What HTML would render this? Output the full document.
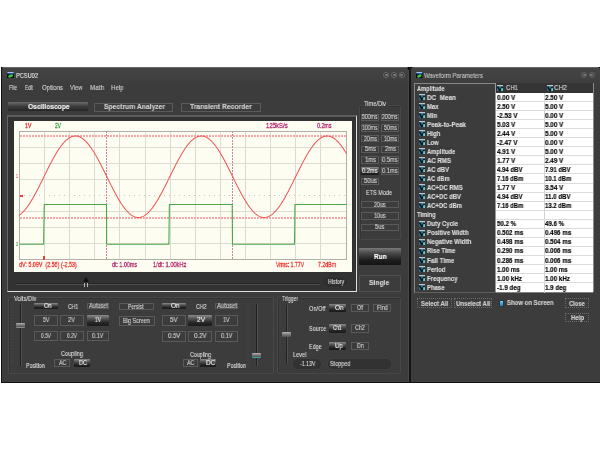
<!DOCTYPE html><html><head><meta charset="utf-8"><style>
*{margin:0;padding:0;box-sizing:border-box}
html,body{width:600px;height:450px;overflow:hidden;background:#fff}
body{position:relative;font-family:"Liberation Sans",sans-serif}
.abs{position:absolute}
.t{position:absolute;white-space:nowrap;line-height:1;transform-origin:0 0;-webkit-text-stroke:0.12px currentColor;will-change:transform}
.win{position:absolute;background:#3c3c3c}
.btn{position:absolute;border:1px solid #5a5a5a}
.sel{position:absolute;background:linear-gradient(#8c8c8c,#505050 35%,#262626 70%,#1a1a1a);border-radius:1px}
.grp{position:absolute;border:1px solid #484848;border-radius:2px;box-shadow:inset 1px 1px 0 #333}
</style></head><body>

<div class="abs" style="left:596px;top:67px;width:4px;height:4px;background:#000"></div><div class="abs" style="left:1px;top:67px;width:4px;height:4px;background:#000"></div><div class="abs" style="left:405px;top:67px;width:10px;height:4px;background:#000"></div>
<div class="win" style="left:1px;top:67px;width:408px;height:316px;border-radius:3px 3px 0 0;border:1px solid #111;border-top:1px solid #666;background:linear-gradient(#444 0px,#3e3e3e 14px,#3c3c3c 20px)"></div>
<div class="win" style="left:411px;top:67px;width:189px;height:316px;border-radius:3px 3px 0 0;border-bottom:1px solid #111;border-top:1px solid #666;background:linear-gradient(#444 0px,#3e3e3e 14px,#3c3c3c 20px)"></div>
<div class="abs" style="left:409px;top:67px;width:2px;height:316px;background:#151515"></div><div class="abs" style="left:408px;top:70px;width:1px;height:312px;background:#484848"></div>
<svg class="abs" style="left:7px;top:71.75px" width="7" height="6.5" viewBox="0 0 7 7" preserveAspectRatio="none"><rect width="7" height="7" fill="#050805"/><rect x="0.3" y="0" width="6.4" height="1.4" fill="#9cc4f4"/><rect x="0.3" y="1.4" width="6.4" height="1" fill="#2a58c8"/><ellipse cx="3.6" cy="4.3" rx="2.6" ry="1.4" transform="rotate(-25 3.6 4.3)" fill="#3ac83a"/></svg>
<div class="t" style="left:15.50px;top:71.89px;font-size:7.5px;font-weight:normal;color:#e6e6e6;transform:scaleX(0.7537);">PCSU02</div>
<div class="abs" style="left:383px;top:72px;width:6px;height:6px;border-radius:50%;border:1px solid #6a6a6a;background:#383838"></div><div class="abs" style="left:384.5px;top:74px;width:3px;height:2px;background:#7a7a7a;border-radius:1px"></div>
<div class="abs" style="left:391px;top:72px;width:6px;height:6px;border-radius:50%;border:1px solid #6a6a6a;background:#383838"></div><div class="abs" style="left:392.5px;top:74px;width:3px;height:2px;background:#7a7a7a;border-radius:1px"></div>
<div class="abs" style="left:398.5px;top:72px;width:6px;height:6px;border-radius:50%;border:1px solid #6a6a6a;background:#383838"></div><div class="abs" style="left:400.0px;top:74px;width:3px;height:2px;background:#7a7a7a;border-radius:1px"></div>
<div class="t" style="left:9.10px;top:84.19px;font-size:7.5px;font-weight:normal;color:#d4d4d4;transform:scaleX(0.6780);">File</div>
<div class="t" style="left:24.90px;top:84.19px;font-size:7.5px;font-weight:normal;color:#d4d4d4;transform:scaleX(0.6184);">Edit</div>
<div class="t" style="left:42.30px;top:84.19px;font-size:7.5px;font-weight:normal;color:#d4d4d4;transform:scaleX(0.8121);">Options</div>
<div class="t" style="left:70.40px;top:84.19px;font-size:7.5px;font-weight:normal;color:#d4d4d4;transform:scaleX(0.7690);">View</div>
<div class="t" style="left:89.90px;top:84.19px;font-size:7.5px;font-weight:normal;color:#d4d4d4;transform:scaleX(0.8449);">Math</div>
<div class="t" style="left:110.90px;top:84.19px;font-size:7.5px;font-weight:normal;color:#d4d4d4;transform:scaleX(0.8162);">Help</div>
<div class="abs" style="left:8px;top:101.5px;width:80px;height:9.5px;background:linear-gradient(#6a6a6a,#3a3a3a 50%,#262626);border-radius:1px"></div>
<div class="t" style="left:27.50px;top:102.89px;font-size:7.5px;font-weight:bold;color:#f4f4f4;transform:scaleX(0.8889);-webkit-text-stroke:0.15px currentColor;">Oscilloscope</div>
<div class="btn" style="left:94px;top:102.5px;width:79px;height:9.5px"></div>
<div class="t" style="left:104.00px;top:103.39px;font-size:7.5px;font-weight:bold;color:#d0d0d0;transform:scaleX(0.9014);-webkit-text-stroke:0.15px currentColor;">Spectrum Analyzer</div>
<div class="btn" style="left:181px;top:102.5px;width:80px;height:9.5px"></div>
<div class="t" style="left:190.00px;top:103.39px;font-size:7.5px;font-weight:bold;color:#d0d0d0;transform:scaleX(0.9026);-webkit-text-stroke:0.15px currentColor;">Transient Recorder</div>
<div class="abs" style="left:7px;top:114.5px;width:350px;height:177.5px;border-top:2px solid #5c5c5c;border-left:1px solid #666;border-right:1px solid #e0e0e0;border-bottom:1px solid #e0e0e0"></div>
<div class="abs" style="left:8px;top:116.5px;width:348px;height:174.5px;background:#323232"></div>
<div class="abs" style="left:14px;top:121px;width:337.5px;height:150.5px;background:#fdfdf2"></div>
<svg class="abs" style="left:0;top:0" width="600" height="450" viewBox="0 0 600 450" shape-rendering="crispEdges"><line x1="44.5" y1="131" x2="44.5" y2="260" stroke="#dddcd2"/><line x1="69.5" y1="131" x2="69.5" y2="260" stroke="#dddcd2"/><line x1="94.5" y1="131" x2="94.5" y2="260" stroke="#dddcd2"/><line x1="119.5" y1="131" x2="119.5" y2="260" stroke="#dddcd2"/><line x1="145.5" y1="131" x2="145.5" y2="260" stroke="#dddcd2"/><line x1="170.5" y1="131" x2="170.5" y2="260" stroke="#dddcd2"/><line x1="195.5" y1="131" x2="195.5" y2="260" stroke="#dddcd2"/><line x1="220.5" y1="131" x2="220.5" y2="260" stroke="#dddcd2"/><line x1="245.5" y1="131" x2="245.5" y2="260" stroke="#dddcd2"/><line x1="270.5" y1="131" x2="270.5" y2="260" stroke="#dddcd2"/><line x1="295.5" y1="131" x2="295.5" y2="260" stroke="#dddcd2"/><line x1="320.5" y1="131" x2="320.5" y2="260" stroke="#dddcd2"/><line x1="19" y1="147.5" x2="346.5" y2="147.5" stroke="#dddcd2"/><line x1="19" y1="163.5" x2="346.5" y2="163.5" stroke="#dddcd2"/><line x1="19" y1="179.5" x2="346.5" y2="179.5" stroke="#dddcd2"/><line x1="19" y1="195.5" x2="346.5" y2="195.5" stroke="#c8c8c0" stroke-dasharray="1 4"/><line x1="19" y1="211.5" x2="346.5" y2="211.5" stroke="#dddcd2"/><line x1="19" y1="227.5" x2="346.5" y2="227.5" stroke="#dddcd2"/><line x1="19" y1="243.5" x2="346.5" y2="243.5" stroke="#dddcd2"/><rect x="19.5" y="131.5" width="327" height="128" fill="none" stroke="#b0b0a8"/><line x1="20" y1="136" x2="346.5" y2="136" stroke="#f6a8a8" stroke-width="2" stroke-dasharray="2 1"/><line x1="20" y1="217.5" x2="346.5" y2="217.5" stroke="#f6a8a8" stroke-width="2" stroke-dasharray="2 1"/><line x1="106.5" y1="131" x2="106.5" y2="260" stroke="#d080a8" stroke-dasharray="2 1"/><line x1="232.5" y1="131" x2="232.5" y2="260" stroke="#d080a8" stroke-dasharray="2 1"/></svg>
<svg class="abs" style="left:0;top:0" width="600" height="450" viewBox="0 0 600 450"><polyline points="19.00,215.36 19.50,215.02 20.00,214.66 20.50,214.27 21.00,213.86 21.50,213.43 22.00,212.98 22.50,212.50 23.00,212.00 23.50,211.48 24.00,210.94 24.50,210.37 25.00,209.79 25.50,209.18 26.00,208.56 26.50,207.91 27.00,207.25 27.50,206.56 28.00,205.86 28.50,205.14 29.00,204.40 29.50,203.64 30.00,202.87 30.50,202.08 31.00,201.28 31.50,200.46 32.00,199.62 32.50,198.78 33.00,197.91 33.50,197.04 34.00,196.15 34.50,195.25 35.00,194.34 35.50,193.41 36.00,192.48 36.50,191.54 37.00,190.58 37.50,189.62 38.00,188.65 38.50,187.68 39.00,186.69 39.50,185.70 40.00,184.71 40.50,183.71 41.00,182.70 41.50,181.70 42.00,180.69 42.50,179.67 43.00,178.66 43.50,177.64 44.00,176.62 44.50,175.61 45.00,174.59 45.50,173.57 46.00,172.56 46.50,171.55 47.00,170.54 47.50,169.54 48.00,168.54 48.50,167.55 49.00,166.56 49.50,165.58 50.00,164.60 50.50,163.64 51.00,162.68 51.50,161.73 52.00,160.79 52.50,159.86 53.00,158.94 53.50,158.03 54.00,157.13 54.50,156.24 55.00,155.37 55.50,154.51 56.00,153.67 56.50,152.83 57.00,152.02 57.50,151.22 58.00,150.43 58.50,149.66 59.00,148.91 59.50,148.18 60.00,147.46 60.50,146.76 61.00,146.09 61.50,145.42 62.00,144.78 62.50,144.16 63.00,143.56 63.50,142.98 64.00,142.42 64.50,141.89 65.00,141.37 65.50,140.88 66.00,140.41 66.50,139.96 67.00,139.53 67.50,139.13 68.00,138.75 68.50,138.39 69.00,138.06 69.50,137.76 70.00,137.47 70.50,137.21 71.00,136.98 71.50,136.77 72.00,136.59 72.50,136.43 73.00,136.29 73.50,136.18 74.00,136.10 74.50,136.04 75.00,136.01 75.50,136.00 76.00,136.02 76.50,136.06 77.00,136.13 77.50,136.22 78.00,136.34 78.50,136.49 79.00,136.66 79.50,136.85 80.00,137.07 80.50,137.31 81.00,137.58 81.50,137.88 82.00,138.19 82.50,138.53 83.00,138.90 83.50,139.29 84.00,139.70 84.50,140.13 85.00,140.59 85.50,141.07 86.00,141.57 86.50,142.10 87.00,142.64 87.50,143.21 88.00,143.80 88.50,144.41 89.00,145.04 89.50,145.69 90.00,146.35 90.50,147.04 91.00,147.75 91.50,148.47 92.00,149.21 92.50,149.97 93.00,150.75 93.50,151.54 94.00,152.34 94.50,153.17 95.00,154.00 95.50,154.85 96.00,155.72 96.50,156.60 97.00,157.49 97.50,158.39 98.00,159.30 98.50,160.23 99.00,161.16 99.50,162.11 100.00,163.06 100.50,164.02 101.00,164.99 101.50,165.97 102.00,166.95 102.50,167.94 103.00,168.94 103.50,169.94 104.00,170.95 104.50,171.95 105.00,172.97 105.50,173.98 106.00,175.00 106.50,176.01 107.00,177.03 107.50,178.05 108.00,179.06 108.50,180.08 109.00,181.09 109.50,182.10 110.00,183.11 110.50,184.11 111.00,185.11 111.50,186.10 112.00,187.09 112.50,188.07 113.00,189.04 113.50,190.01 114.00,190.97 114.50,191.91 115.00,192.85 115.50,193.78 116.00,194.70 116.50,195.61 117.00,196.51 117.50,197.39 118.00,198.26 118.50,199.12 119.00,199.96 119.50,200.79 120.00,201.60 120.50,202.40 121.00,203.18 121.50,203.95 122.00,204.70 122.50,205.43 123.00,206.14 123.50,206.84 124.00,207.51 124.50,208.17 125.00,208.81 125.50,209.43 126.00,210.03 126.50,210.60 127.00,211.16 127.50,211.69 128.00,212.20 128.50,212.70 129.00,213.16 129.50,213.61 130.00,214.03 130.50,214.43 131.00,214.81 131.50,215.16 132.00,215.49 132.50,215.79 133.00,216.07 133.50,216.32 134.00,216.55 134.50,216.76 135.00,216.94 135.50,217.10 136.00,217.23 136.50,217.33 137.00,217.41 137.50,217.47 138.00,217.49 138.50,217.50 139.00,217.48 139.50,217.43 140.00,217.36 140.50,217.26 141.00,217.14 141.50,216.99 142.00,216.82 142.50,216.62 143.00,216.40 143.50,216.15 144.00,215.88 144.50,215.58 145.00,215.26 145.50,214.91 146.00,214.54 146.50,214.15 147.00,213.74 147.50,213.30 148.00,212.84 148.50,212.35 149.00,211.85 149.50,211.32 150.00,210.77 150.50,210.20 151.00,209.61 151.50,209.00 152.00,208.37 152.50,207.71 153.00,207.04 153.50,206.35 154.00,205.65 154.50,204.92 155.00,204.18 155.50,203.41 156.00,202.64 156.50,201.84 157.00,201.03 157.50,200.21 158.00,199.37 158.50,198.52 159.00,197.65 159.50,196.77 160.00,195.88 160.50,194.98 161.00,194.06 161.50,193.13 162.00,192.20 162.50,191.25 163.00,190.30 163.50,189.33 164.00,188.36 164.50,187.38 165.00,186.40 165.50,185.41 166.00,184.41 166.50,183.41 167.00,182.40 167.50,181.39 168.00,180.38 168.50,179.37 169.00,178.35 169.50,177.33 170.00,176.32 170.50,175.30 171.00,174.28 171.50,173.27 172.00,172.26 172.50,171.25 173.00,170.24 173.50,169.24 174.00,168.24 174.50,167.25 175.00,166.26 175.50,165.28 176.00,164.31 176.50,163.35 177.00,162.39 177.50,161.44 178.00,160.51 178.50,159.58 179.00,158.66 179.50,157.76 180.00,156.86 180.50,155.98 181.00,155.11 181.50,154.26 182.00,153.41 182.50,152.59 183.00,151.78 183.50,150.98 184.00,150.20 184.50,149.44 185.00,148.69 185.50,147.96 186.00,147.25 186.50,146.56 187.00,145.89 187.50,145.23 188.00,144.60 188.50,143.98 189.00,143.39 189.50,142.81 190.00,142.26 190.50,141.73 191.00,141.22 191.50,140.73 192.00,140.27 192.50,139.83 193.00,139.41 193.50,139.01 194.00,138.64 194.50,138.29 195.00,137.97 195.50,137.67 196.00,137.39 196.50,137.14 197.00,136.91 197.50,136.71 198.00,136.54 198.50,136.38 199.00,136.26 199.50,136.16 200.00,136.08 200.50,136.03 201.00,136.00 201.50,136.00 202.00,136.03 202.50,136.08 203.00,136.16 203.50,136.26 204.00,136.38 204.50,136.54 205.00,136.71 205.50,136.91 206.00,137.14 206.50,137.39 207.00,137.67 207.50,137.97 208.00,138.29 208.50,138.64 209.00,139.01 209.50,139.41 210.00,139.83 210.50,140.27 211.00,140.73 211.50,141.22 212.00,141.73 212.50,142.26 213.00,142.81 213.50,143.39 214.00,143.98 214.50,144.60 215.00,145.23 215.50,145.89 216.00,146.56 216.50,147.25 217.00,147.96 217.50,148.69 218.00,149.44 218.50,150.20 219.00,150.98 219.50,151.78 220.00,152.59 220.50,153.41 221.00,154.26 221.50,155.11 222.00,155.98 222.50,156.86 223.00,157.76 223.50,158.66 224.00,159.58 224.50,160.51 225.00,161.44 225.50,162.39 226.00,163.35 226.50,164.31 227.00,165.28 227.50,166.26 228.00,167.25 228.50,168.24 229.00,169.24 229.50,170.24 230.00,171.25 230.50,172.26 231.00,173.27 231.50,174.28 232.00,175.30 232.50,176.32 233.00,177.33 233.50,178.35 234.00,179.37 234.50,180.38 235.00,181.39 235.50,182.40 236.00,183.41 236.50,184.41 237.00,185.41 237.50,186.40 238.00,187.38 238.50,188.36 239.00,189.33 239.50,190.30 240.00,191.25 240.50,192.20 241.00,193.13 241.50,194.06 242.00,194.98 242.50,195.88 243.00,196.77 243.50,197.65 244.00,198.52 244.50,199.37 245.00,200.21 245.50,201.03 246.00,201.84 246.50,202.64 247.00,203.41 247.50,204.18 248.00,204.92 248.50,205.65 249.00,206.35 249.50,207.04 250.00,207.71 250.50,208.37 251.00,209.00 251.50,209.61 252.00,210.20 252.50,210.77 253.00,211.32 253.50,211.85 254.00,212.35 254.50,212.84 255.00,213.30 255.50,213.74 256.00,214.15 256.50,214.54 257.00,214.91 257.50,215.26 258.00,215.58 258.50,215.88 259.00,216.15 259.50,216.40 260.00,216.62 260.50,216.82 261.00,216.99 261.50,217.14 262.00,217.26 262.50,217.36 263.00,217.43 263.50,217.48 264.00,217.50 264.50,217.49 265.00,217.47 265.50,217.41 266.00,217.33 266.50,217.23 267.00,217.10 267.50,216.94 268.00,216.76 268.50,216.55 269.00,216.32 269.50,216.07 270.00,215.79 270.50,215.49 271.00,215.16 271.50,214.81 272.00,214.43 272.50,214.03 273.00,213.61 273.50,213.16 274.00,212.70 274.50,212.20 275.00,211.69 275.50,211.16 276.00,210.60 276.50,210.03 277.00,209.43 277.50,208.81 278.00,208.17 278.50,207.51 279.00,206.84 279.50,206.14 280.00,205.43 280.50,204.70 281.00,203.95 281.50,203.18 282.00,202.40 282.50,201.60 283.00,200.79 283.50,199.96 284.00,199.12 284.50,198.26 285.00,197.39 285.50,196.51 286.00,195.61 286.50,194.70 287.00,193.78 287.50,192.85 288.00,191.91 288.50,190.97 289.00,190.01 289.50,189.04 290.00,188.07 290.50,187.09 291.00,186.10 291.50,185.11 292.00,184.11 292.50,183.11 293.00,182.10 293.50,181.09 294.00,180.08 294.50,179.06 295.00,178.05 295.50,177.03 296.00,176.01 296.50,175.00 297.00,173.98 297.50,172.97 298.00,171.95 298.50,170.95 299.00,169.94 299.50,168.94 300.00,167.94 300.50,166.95 301.00,165.97 301.50,164.99 302.00,164.02 302.50,163.06 303.00,162.11 303.50,161.16 304.00,160.23 304.50,159.30 305.00,158.39 305.50,157.49 306.00,156.60 306.50,155.72 307.00,154.85 307.50,154.00 308.00,153.17 308.50,152.34 309.00,151.54 309.50,150.75 310.00,149.97 310.50,149.21 311.00,148.47 311.50,147.75 312.00,147.04 312.50,146.35 313.00,145.69 313.50,145.04 314.00,144.41 314.50,143.80 315.00,143.21 315.50,142.64 316.00,142.10 316.50,141.57 317.00,141.07 317.50,140.59 318.00,140.13 318.50,139.70 319.00,139.29 319.50,138.90 320.00,138.53 320.50,138.19 321.00,137.88 321.50,137.58 322.00,137.31 322.50,137.07 323.00,136.85 323.50,136.66 324.00,136.49 324.50,136.34 325.00,136.22 325.50,136.13 326.00,136.06 326.50,136.02 327.00,136.00 327.50,136.01 328.00,136.04 328.50,136.10 329.00,136.18 329.50,136.29 330.00,136.43 330.50,136.59 331.00,136.77 331.50,136.98 332.00,137.21 332.50,137.47 333.00,137.76 333.50,138.06 334.00,138.39 334.50,138.75 335.00,139.13 335.50,139.53 336.00,139.96 336.50,140.41 337.00,140.88 337.50,141.37 338.00,141.89 338.50,142.42 339.00,142.98 339.50,143.56 340.00,144.16 340.50,144.78 341.00,145.42 341.50,146.09 342.00,146.76 342.50,147.46 343.00,148.18 343.50,148.91 344.00,149.66 344.50,150.43 345.00,151.22 345.50,152.02 346.00,152.83 346.50,153.67" fill="none" stroke="#f05858" stroke-width="1.05"/></svg>
<svg class="abs" style="left:0;top:0" width="600" height="450" viewBox="0 0 600 450" shape-rendering="crispEdges"><polyline points="20,244.2 43.6,244.2 44.3,204.5 106.5,204.5 106.7,244.2 168.9,244.2 169.4,204.5 232.2,204.5 232.5,244.2 294.5,244.2 295.0,204.5 346.5,204.5" fill="none" stroke="#48a848" stroke-width="1.1" shape-rendering="auto"/><rect x="43" y="256" width="2" height="4" fill="#e84040"/><rect x="20" y="195" width="3" height="2" fill="#e84040"/></svg>
<div class="t" style="left:25.00px;top:122.14px;font-size:8px;font-weight:normal;color:#ee2e2e;transform:scaleX(0.6431);-webkit-text-stroke:0.3px currentColor;">1V</div>
<div class="t" style="left:55.00px;top:122.14px;font-size:8px;font-weight:normal;color:#20962a;transform:scaleX(0.5920);-webkit-text-stroke:0.3px currentColor;">2V</div>
<div class="t" style="left:266.00px;top:122.14px;font-size:8px;font-weight:normal;color:#b0206a;transform:scaleX(0.7472);-webkit-text-stroke:0.3px currentColor;">125kS/s</div>
<div class="t" style="left:316.50px;top:122.14px;font-size:8px;font-weight:normal;color:#b0206a;transform:scaleX(0.6652);-webkit-text-stroke:0.3px currentColor;">0.2ms</div>
<div class="t" style="left:15.50px;top:173.85px;font-size:5.5px;font-weight:normal;color:#ee2e2e;transform:scaleX(0.6531);">1</div>
<div class="t" style="left:15.50px;top:241.85px;font-size:5.5px;font-weight:normal;color:#20962a;transform:scaleX(0.6531);">2</div>
<div class="t" style="left:19.00px;top:261.14px;font-size:8px;font-weight:normal;color:#ee2e2e;transform:scaleX(0.6712);-webkit-text-stroke:0.3px currentColor;">dV: 5.09V&nbsp; (2.56) (-2.53)</div>
<div class="t" style="left:112.00px;top:261.14px;font-size:8px;font-weight:normal;color:#b0206a;transform:scaleX(0.6692);-webkit-text-stroke:0.3px currentColor;">dt: 1.00ms</div>
<div class="t" style="left:152.50px;top:261.14px;font-size:8px;font-weight:normal;color:#b0206a;transform:scaleX(0.7053);-webkit-text-stroke:0.3px currentColor;">1/dt: 1.00kHz</div>
<div class="t" style="left:275.75px;top:261.14px;font-size:8px;font-weight:normal;color:#ee2e2e;transform:scaleX(0.6405);-webkit-text-stroke:0.3px currentColor;">Vrms: 1.77V</div>
<div class="t" style="left:318.00px;top:261.14px;font-size:8px;font-weight:normal;color:#ee2e2e;transform:scaleX(0.6527);-webkit-text-stroke:0.3px currentColor;">7.2dBm</div>
<div class="abs" style="left:16px;top:283px;width:304px;height:2px;background:#262626;border-bottom:1px solid #4e4e4e"></div>
<div class="abs" style="left:83.5px;top:282.5px;width:1.8px;height:4.5px;background:#b8b8b8"></div><div class="abs" style="left:86.5px;top:282.5px;width:1.8px;height:4.5px;background:#b8b8b8"></div>
<div class="abs" style="left:83px;top:277px;width:0;height:0;border-left:3px solid transparent;border-right:3px solid transparent;border-bottom:5px solid #111"></div>
<div class="abs" style="left:322px;top:277px;width:26px;height:10px;border-radius:5px;background:#2e2e2e;box-shadow:0 0 1px #555"></div>
<div class="t" style="left:327.70px;top:278.87px;font-size:6.5px;font-weight:normal;color:#dedede;transform:scaleX(0.7957);">History</div>
<div class="grp" style="left:359px;top:105px;width:42px;height:135px"></div>
<div class="abs" style="left:363px;top:101px;width:25px;height:6px;background:#3c3c3c"></div>
<div class="t" style="left:364.00px;top:100.33px;font-size:7px;font-weight:normal;color:#dedede;transform:scaleX(0.8041);">Time/Div</div>
<div class="btn" style="left:361px;top:113.5px;width:18px;height:7.5px"></div>
<div class="t" style="left:362.25px;top:114.27px;font-size:6.5px;font-weight:normal;color:#d4d4d4;transform:scaleX(0.7942);">500ms</div>
<div class="btn" style="left:381px;top:113.5px;width:18px;height:7.5px"></div>
<div class="t" style="left:382.25px;top:114.27px;font-size:6.5px;font-weight:normal;color:#d4d4d4;transform:scaleX(0.7942);">200ms</div>
<div class="btn" style="left:361px;top:124.2px;width:18px;height:7.5px"></div>
<div class="t" style="left:362.25px;top:124.97px;font-size:6.5px;font-weight:normal;color:#d4d4d4;transform:scaleX(0.7942);">100ms</div>
<div class="btn" style="left:381px;top:124.2px;width:18px;height:7.5px"></div>
<div class="t" style="left:383.50px;top:124.97px;font-size:6.5px;font-weight:normal;color:#d4d4d4;transform:scaleX(0.8173);">50ms</div>
<div class="btn" style="left:361px;top:134.9px;width:18px;height:7.5px"></div>
<div class="t" style="left:363.50px;top:135.67px;font-size:6.5px;font-weight:normal;color:#d4d4d4;transform:scaleX(0.8173);">20ms</div>
<div class="btn" style="left:381px;top:134.9px;width:18px;height:7.5px"></div>
<div class="t" style="left:383.50px;top:135.67px;font-size:6.5px;font-weight:normal;color:#d4d4d4;transform:scaleX(0.8173);">10ms</div>
<div class="btn" style="left:361px;top:145.6px;width:18px;height:7.5px"></div>
<div class="t" style="left:364.50px;top:146.37px;font-size:6.5px;font-weight:normal;color:#d4d4d4;transform:scaleX(0.8957);">5ms</div>
<div class="btn" style="left:381px;top:145.6px;width:18px;height:7.5px"></div>
<div class="t" style="left:384.50px;top:146.37px;font-size:6.5px;font-weight:normal;color:#d4d4d4;transform:scaleX(0.8957);">2ms</div>
<div class="btn" style="left:361px;top:156.3px;width:18px;height:7.5px"></div>
<div class="t" style="left:364.50px;top:157.07px;font-size:6.5px;font-weight:normal;color:#d4d4d4;transform:scaleX(0.8957);">1ms</div>
<div class="btn" style="left:381px;top:156.3px;width:18px;height:7.5px"></div>
<div class="t" style="left:382.25px;top:157.07px;font-size:6.5px;font-weight:normal;color:#d4d4d4;transform:scaleX(0.8756);">0.5ms</div>
<div class="sel" style="left:361px;top:167.0px;width:18px;height:7.5px"></div>
<div class="t" style="left:362.25px;top:167.77px;font-size:6.5px;font-weight:normal;color:#f4f4f4;transform:scaleX(0.8756);">0.2ms</div>
<div class="btn" style="left:381px;top:167.0px;width:18px;height:7.5px"></div>
<div class="t" style="left:382.25px;top:167.77px;font-size:6.5px;font-weight:normal;color:#d4d4d4;transform:scaleX(0.8756);">0.1ms</div>
<div class="btn" style="left:361px;top:177.7px;width:18px;height:7.5px"></div>
<div class="t" style="left:363.50px;top:178.47px;font-size:6.5px;font-weight:normal;color:#d4d4d4;transform:scaleX(0.9214);">50us</div>
<div class="t" style="left:366.00px;top:189.33px;font-size:7px;font-weight:normal;color:#dedede;transform:scaleX(0.7860);">ETS Mode</div>
<div class="btn" style="left:361px;top:200.8px;width:38px;height:7.5px"></div>
<div class="t" style="left:374.15px;top:201.57px;font-size:6.5px;font-weight:normal;color:#d4d4d4;transform:scaleX(0.8292);">20us</div>
<div class="btn" style="left:361px;top:212.2px;width:38px;height:7.5px"></div>
<div class="t" style="left:374.15px;top:213.02px;font-size:6.5px;font-weight:normal;color:#d4d4d4;transform:scaleX(0.8292);">10us</div>
<div class="btn" style="left:361px;top:223.7px;width:38px;height:7.5px"></div>
<div class="t" style="left:375.35px;top:224.47px;font-size:6.5px;font-weight:normal;color:#d4d4d4;transform:scaleX(0.8870);">5us</div>
<div class="abs" style="left:359px;top:247.5px;width:42px;height:17.5px;background:linear-gradient(#7a7a7a,#4a4a4a 30%,#1e1e1e 70%,#141414);border-radius:1px"></div>
<div class="t" style="left:374.00px;top:253.04px;font-size:8px;font-weight:bold;color:#fff;transform:scaleX(0.8161);-webkit-text-stroke:0.15px currentColor;">Run</div>
<div class="abs" style="left:359px;top:274.5px;width:42px;height:17.5px;border:1px solid #505050;border-radius:1px"></div>
<div class="t" style="left:369.40px;top:279.44px;font-size:8px;font-weight:bold;color:#d4d4d4;transform:scaleX(0.8453);-webkit-text-stroke:0.15px currentColor;">Single</div>
<div class="grp" style="left:8px;top:297px;width:266px;height:77px"></div>
<div class="abs" style="left:13px;top:295px;width:25px;height:6px;background:#3c3c3c"></div>
<div class="t" style="left:14.20px;top:294.73px;font-size:7px;font-weight:normal;color:#dedede;transform:scaleX(0.8225);">Volts/Div</div>
<div class="grp" style="left:277px;top:297px;width:124px;height:77px"></div>
<div class="abs" style="left:280px;top:295px;width:20px;height:6px;background:#3c3c3c"></div>
<div class="t" style="left:281.70px;top:295.23px;font-size:7px;font-weight:normal;color:#dedede;transform:scaleX(0.7344);">Trigger</div>
<div class="sel" style="left:33.5px;top:303.4px;width:24.00px;height:5.90px"></div>
<div class="t" style="left:43.50px;top:303.22px;font-size:6.5px;font-weight:normal;color:#f4f4f4;transform:scaleX(0.8879);">On</div>
<div class="t" style="left:68.00px;top:303.13px;font-size:7px;font-weight:normal;color:#dedede;transform:scaleX(0.7278);">CH1</div>
<div class="btn" style="left:86.7px;top:303.4px;width:22.80px;height:5.90px"></div>
<div class="t" style="left:88.80px;top:303.22px;font-size:6.5px;font-weight:normal;color:#d4d4d4;transform:scaleX(0.8527);">Autoset</div>
<div class="btn" style="left:33.5px;top:314.8px;width:24.10px;height:10.80px"></div>
<div class="t" style="left:42.70px;top:317.07px;font-size:6.5px;font-weight:normal;color:#d4d4d4;transform:scaleX(0.8047);">5V</div>
<div class="btn" style="left:59.7px;top:314.8px;width:24.10px;height:10.80px"></div>
<div class="t" style="left:68.20px;top:317.07px;font-size:6.5px;font-weight:normal;color:#d4d4d4;transform:scaleX(0.8927);">2V</div>
<div class="sel" style="left:86.7px;top:314.8px;width:22.80px;height:10.80px"></div>
<div class="t" style="left:95.40px;top:317.07px;font-size:6.5px;font-weight:normal;color:#f4f4f4;transform:scaleX(0.7670);">1V</div>
<div class="btn" style="left:33.5px;top:330.6px;width:24.10px;height:10.60px"></div>
<div class="t" style="left:40.60px;top:332.77px;font-size:6.5px;font-weight:normal;color:#d4d4d4;transform:scaleX(0.7402);">0.5V</div>
<div class="btn" style="left:59.7px;top:330.6px;width:24.10px;height:10.60px"></div>
<div class="t" style="left:66.80px;top:332.77px;font-size:6.5px;font-weight:normal;color:#d4d4d4;transform:scaleX(0.7402);">0.2V</div>
<div class="btn" style="left:86.7px;top:330.6px;width:22.80px;height:10.60px"></div>
<div class="t" style="left:92.30px;top:332.77px;font-size:6.5px;font-weight:normal;color:#d4d4d4;transform:scaleX(0.8523);">0.1V</div>
<div class="t" style="left:61.00px;top:350.43px;font-size:7px;font-weight:normal;color:#dedede;transform:scaleX(0.7959);">Coupling</div>
<div class="btn" style="left:54px;top:359px;width:16.00px;height:7.60px"></div>
<div class="t" style="left:58.60px;top:359.67px;font-size:6.5px;font-weight:normal;color:#d4d4d4;transform:scaleX(0.8194);">AC</div>
<div class="sel" style="left:74px;top:359px;width:16.00px;height:7.60px"></div>
<div class="t" style="left:78.70px;top:359.67px;font-size:6.5px;font-weight:normal;color:#f4f4f4;transform:scaleX(0.8519);">DC</div>
<div class="t" style="left:25.70px;top:362.43px;font-size:7px;font-weight:normal;color:#dedede;transform:scaleX(0.7548);">Position</div>
<div class="btn" style="left:118.5px;top:303.4px;width:35.50px;height:6.60px"></div>
<div class="t" style="left:128.40px;top:303.57px;font-size:6.5px;font-weight:normal;color:#d4d4d4;transform:scaleX(0.7849);">Persist</div>
<div class="btn" style="left:118.5px;top:315.6px;width:36.50px;height:10.40px"></div>
<div class="t" style="left:122.80px;top:317.67px;font-size:6.5px;font-weight:normal;color:#d4d4d4;transform:scaleX(0.8460);">Big Screen</div>
<div class="sel" style="left:162.4px;top:303.4px;width:24.10px;height:5.90px"></div>
<div class="t" style="left:171.00px;top:303.22px;font-size:6.5px;font-weight:normal;color:#f4f4f4;transform:scaleX(0.9686);">On</div>
<div class="t" style="left:196.40px;top:303.13px;font-size:7px;font-weight:normal;color:#dedede;transform:scaleX(0.7563);">CH2</div>
<div class="btn" style="left:215.4px;top:303.4px;width:22.60px;height:5.90px"></div>
<div class="t" style="left:217.00px;top:303.22px;font-size:6.5px;font-weight:normal;color:#d4d4d4;transform:scaleX(0.9072);">Autoset</div>
<div class="btn" style="left:162.4px;top:315px;width:24.10px;height:10.60px"></div>
<div class="t" style="left:170.40px;top:317.17px;font-size:6.5px;font-weight:normal;color:#d4d4d4;transform:scaleX(0.9556);">5V</div>
<div class="sel" style="left:188px;top:315px;width:24.00px;height:10.60px"></div>
<div class="t" style="left:197.00px;top:317.17px;font-size:6.5px;font-weight:normal;color:#f4f4f4;transform:scaleX(1.0059);">2V</div>
<div class="btn" style="left:215.4px;top:315px;width:22.60px;height:10.60px"></div>
<div class="t" style="left:223.30px;top:317.17px;font-size:6.5px;font-weight:normal;color:#d4d4d4;transform:scaleX(0.8299);">1V</div>
<div class="btn" style="left:162.4px;top:331px;width:24.10px;height:11.00px"></div>
<div class="t" style="left:168.00px;top:333.37px;font-size:6.5px;font-weight:normal;color:#d4d4d4;transform:scaleX(0.9196);">0.5V</div>
<div class="btn" style="left:188px;top:331px;width:24.00px;height:11.00px"></div>
<div class="t" style="left:194.40px;top:333.37px;font-size:6.5px;font-weight:normal;color:#d4d4d4;transform:scaleX(0.9421);">0.2V</div>
<div class="btn" style="left:215.4px;top:331px;width:22.60px;height:11.00px"></div>
<div class="t" style="left:221.00px;top:333.37px;font-size:6.5px;font-weight:normal;color:#d4d4d4;transform:scaleX(0.8523);">0.1V</div>
<div class="t" style="left:190.20px;top:350.53px;font-size:7px;font-weight:normal;color:#dedede;transform:scaleX(0.7598);">Coupling</div>
<div class="btn" style="left:183px;top:359px;width:15.00px;height:7.60px"></div>
<div class="t" style="left:187.00px;top:359.67px;font-size:6.5px;font-weight:normal;color:#d4d4d4;transform:scaleX(0.8194);">AC</div>
<div class="sel" style="left:200px;top:359px;width:16.00px;height:7.60px"></div>
<div class="t" style="left:206.30px;top:359.67px;font-size:6.5px;font-weight:normal;color:#f4f4f4;transform:scaleX(0.9691);">DC</div>
<div class="t" style="left:227.00px;top:362.43px;font-size:7px;font-weight:normal;color:#dedede;transform:scaleX(0.7629);">Position</div>
<div class="abs" style="left:20px;top:304px;width:2px;height:62px;background:#222;border-right:1px solid #505050"></div>
<div class="abs" style="left:16px;top:323px;width:9px;height:5px;background:linear-gradient(#b4b4b4,#7a7a7a 50%,#505050);border-radius:1px;border-bottom:1px solid #888"></div>
<div class="abs" style="left:256px;top:304px;width:2px;height:62px;background:#222;border-right:1px solid #505050"></div>
<div class="abs" style="left:252px;top:353px;width:9px;height:5px;background:linear-gradient(#b4b4b4,#7a7a7a 50%,#505050);border-radius:1px;border-bottom:1px solid #3aa"></div>
<div class="abs" style="left:286px;top:305px;width:2px;height:58px;background:#222;border-right:1px solid #505050"></div>
<div class="abs" style="left:11px;top:306px;width:2px;height:58px;background:repeating-linear-gradient(#444 0 1px,transparent 1px 3px)"></div>
<div class="abs" style="left:279px;top:306px;width:2px;height:58px;background:repeating-linear-gradient(#444 0 1px,transparent 1px 3px)"></div>
<div class="abs" style="left:247px;top:306px;width:2px;height:58px;background:repeating-linear-gradient(#444 0 1px,transparent 1px 3px)"></div>
<div class="abs" style="left:282px;top:332px;width:9px;height:5px;background:linear-gradient(#b4b4b4,#7a7a7a 50%,#505050);border-radius:1px"></div>
<div class="t" style="left:308.60px;top:304.93px;font-size:7px;font-weight:normal;color:#dedede;transform:scaleX(0.8098);">On/Off</div>
<div class="sel" style="left:329px;top:304px;width:17.40px;height:8.20px"></div>
<div class="t" style="left:334.60px;top:304.97px;font-size:6.5px;font-weight:normal;color:#f4f4f4;transform:scaleX(0.9686);">On</div>
<div class="btn" style="left:351px;top:304px;width:17.60px;height:8.20px"></div>
<div class="t" style="left:357.00px;top:304.97px;font-size:6.5px;font-weight:normal;color:#d4d4d4;transform:scaleX(0.7007);">Off</div>
<div class="btn" style="left:373px;top:304px;width:18.00px;height:8.20px"></div>
<div class="t" style="left:377.00px;top:304.97px;font-size:6.5px;font-weight:normal;color:#d4d4d4;transform:scaleX(0.8533);">Find</div>
<div class="t" style="left:308.60px;top:324.93px;font-size:7px;font-weight:normal;color:#dedede;transform:scaleX(0.7842);">Source</div>
<div class="sel" style="left:329px;top:323.7px;width:17.40px;height:8.90px"></div>
<div class="t" style="left:333.30px;top:325.02px;font-size:6.5px;font-weight:normal;color:#f4f4f4;transform:scaleX(0.7120);">Ch1</div>
<div class="btn" style="left:351px;top:323.7px;width:17.60px;height:8.90px"></div>
<div class="t" style="left:355.00px;top:325.02px;font-size:6.5px;font-weight:normal;color:#d4d4d4;transform:scaleX(0.8209);">Ch2</div>
<div class="t" style="left:308.60px;top:342.83px;font-size:7px;font-weight:normal;color:#dedede;transform:scaleX(0.7763);">Edge</div>
<div class="sel" style="left:329px;top:341.6px;width:17.40px;height:8.90px"></div>
<div class="t" style="left:334.60px;top:342.92px;font-size:6.5px;font-weight:normal;color:#f4f4f4;transform:scaleX(0.9263);">Up</div>
<div class="btn" style="left:351px;top:341.6px;width:17.60px;height:8.90px"></div>
<div class="t" style="left:356.60px;top:342.92px;font-size:6.5px;font-weight:normal;color:#d4d4d4;transform:scaleX(0.8301);">Dn</div>
<div class="t" style="left:292.70px;top:350.93px;font-size:7px;font-weight:normal;color:#dedede;transform:scaleX(0.7948);">Level</div>
<div class="abs" style="left:293px;top:359px;width:28px;height:9.5px;border-radius:4px;background:#323232;box-shadow:0 0 1px #555"></div>
<div class="t" style="left:299.60px;top:361.47px;font-size:6.5px;font-weight:normal;color:#dedede;transform:scaleX(0.8039);">-1.13V</div>
<div class="abs" style="left:327.7px;top:359px;width:63px;height:9.5px;border-radius:4px;background:#323232;box-shadow:0 0 1px #555"></div>
<div class="t" style="left:330.30px;top:361.47px;font-size:6.5px;font-weight:normal;color:#dedede;transform:scaleX(0.8423);">Stopped</div>
<svg class="abs" style="left:416px;top:71.5px" width="6.5" height="6.5" viewBox="0 0 7 7" preserveAspectRatio="none"><rect width="7" height="7" fill="#050805"/><rect x="0.3" y="0" width="6.4" height="1.4" fill="#9cc4f4"/><rect x="0.3" y="1.4" width="6.4" height="1" fill="#2a58c8"/><ellipse cx="3.6" cy="4.3" rx="2.6" ry="1.4" transform="rotate(-25 3.6 4.3)" fill="#3ac83a"/></svg>
<div class="t" style="left:424.00px;top:71.69px;font-size:7.5px;font-weight:normal;color:#c4c4c4;transform:scaleX(0.7893);">Waveform Parameters</div>
<div class="abs" style="left:581px;top:71.5px;width:6px;height:6px;border-radius:50%;border:1px solid #646464"></div><div class="abs" style="left:582.5px;top:73.5px;width:3px;height:2px;background:#767676;border-radius:1px"></div>
<div class="abs" style="left:588.6px;top:71.5px;width:6px;height:6px;border-radius:50%;border:1px solid #646464"></div><div class="abs" style="left:590.1px;top:73.5px;width:3px;height:2px;background:#767676;border-radius:1px"></div>
<div class="abs" style="left:413.5px;top:83px;width:82.5px;height:210px;border-top:1px solid #888;border-left:1px solid #888;border-bottom:1px solid #5e5e5e"></div>
<div class="abs" style="left:496px;top:292px;width:97px;height:1px;background:#808080"></div>
<div class="abs" style="left:496px;top:83px;width:96.5px;height:9.5px;background:#343434"></div>
<div class="abs" style="left:496px;top:92.5px;width:96.5px;height:199.5px;background:#fff"></div>
<div class="abs" style="left:495px;top:83px;width:1px;height:209px;background:#9a9a9a"></div>
<div class="abs" style="left:543.5px;top:92.5px;width:1px;height:200px;background:#d0d0d0"></div>
<div class="abs" style="left:592.5px;top:83px;width:1px;height:209px;background:#8a8a8a"></div>
<svg class="abs" style="left:497px;top:84.5px" width="6" height="6" viewBox="0 0 6 6"><rect width="6" height="6" fill="#2a6e84"/><rect width="6" height="1.2" fill="#b8c8cc"/><path d="M0.5 1.5 L2.8 5.6 L5.5 2" fill="none" stroke="#080c10" stroke-width="1.4"/><rect x="4.2" y="3.2" width="1.8" height="2.8" fill="#5ad0d8"/></svg>
<div class="t" style="left:505.70px;top:83.89px;font-size:7.5px;font-weight:normal;color:#dcdcdc;transform:scaleX(0.7992);">CH1</div>
<svg class="abs" style="left:547px;top:84.5px" width="6" height="6" viewBox="0 0 6 6"><rect width="6" height="6" fill="#2a6e84"/><rect width="6" height="1.2" fill="#b8c8cc"/><path d="M0.5 1.5 L2.8 5.6 L5.5 2" fill="none" stroke="#080c10" stroke-width="1.4"/><rect x="4.2" y="3.2" width="1.8" height="2.8" fill="#5ad0d8"/></svg>
<div class="t" style="left:554.30px;top:83.89px;font-size:7.5px;font-weight:normal;color:#dcdcdc;transform:scaleX(0.8658);">CH2</div>
<div class="t" style="left:416.70px;top:85.33px;font-size:7px;font-weight:bold;color:#dcdcdc;transform:scaleX(0.8062);-webkit-text-stroke:0.15px currentColor;">Amplitude</div>
<svg class="abs" style="left:418.5px;top:94px" width="6" height="6" viewBox="0 0 6 6"><rect width="6" height="6" fill="#2a6e84"/><rect width="6" height="1.2" fill="#b8c8cc"/><path d="M0.5 1.5 L2.8 5.6 L5.5 2" fill="none" stroke="#080c10" stroke-width="1.4"/><rect x="4.2" y="3.2" width="1.8" height="2.8" fill="#5ad0d8"/></svg>
<div class="t" style="left:426.70px;top:93.63px;font-size:7px;font-weight:bold;color:#dcdcdc;transform:scaleX(0.9089);-webkit-text-stroke:0.15px currentColor;">DC&nbsp; Mean</div>
<div class="t" style="left:496.70px;top:93.63px;font-size:7px;font-weight:bold;color:#000;transform:scaleX(0.9062);-webkit-text-stroke:0.15px currentColor;">0.00 V</div>
<div class="t" style="left:545.00px;top:93.63px;font-size:7px;font-weight:bold;color:#000;transform:scaleX(0.9062);-webkit-text-stroke:0.15px currentColor;">2.50 V</div>
<div class="abs" style="left:496px;top:101px;width:96.5px;height:1px;background:#dcdcdc"></div>
<svg class="abs" style="left:418.5px;top:103px" width="6" height="6" viewBox="0 0 6 6"><rect width="6" height="6" fill="#2a6e84"/><rect width="6" height="1.2" fill="#b8c8cc"/><path d="M0.5 1.5 L2.8 5.6 L5.5 2" fill="none" stroke="#080c10" stroke-width="1.4"/><rect x="4.2" y="3.2" width="1.8" height="2.8" fill="#5ad0d8"/></svg>
<div class="t" style="left:426.70px;top:102.68px;font-size:7px;font-weight:bold;color:#dcdcdc;transform:scaleX(0.8514);-webkit-text-stroke:0.15px currentColor;">Max</div>
<div class="t" style="left:496.70px;top:102.68px;font-size:7px;font-weight:bold;color:#000;transform:scaleX(0.9062);-webkit-text-stroke:0.15px currentColor;">2.50 V</div>
<div class="t" style="left:545.00px;top:102.68px;font-size:7px;font-weight:bold;color:#000;transform:scaleX(0.9062);-webkit-text-stroke:0.15px currentColor;">5.00 V</div>
<div class="abs" style="left:496px;top:110px;width:96.5px;height:1px;background:#dcdcdc"></div>
<svg class="abs" style="left:418.5px;top:112px" width="6" height="6" viewBox="0 0 6 6"><rect width="6" height="6" fill="#2a6e84"/><rect width="6" height="1.2" fill="#b8c8cc"/><path d="M0.5 1.5 L2.8 5.6 L5.5 2" fill="none" stroke="#080c10" stroke-width="1.4"/><rect x="4.2" y="3.2" width="1.8" height="2.8" fill="#5ad0d8"/></svg>
<div class="t" style="left:426.70px;top:111.73px;font-size:7px;font-weight:bold;color:#dcdcdc;transform:scaleX(0.8539);-webkit-text-stroke:0.15px currentColor;">Min</div>
<div class="t" style="left:496.70px;top:111.73px;font-size:7px;font-weight:bold;color:#000;transform:scaleX(0.9102);-webkit-text-stroke:0.15px currentColor;">-2.53 V</div>
<div class="t" style="left:545.00px;top:111.73px;font-size:7px;font-weight:bold;color:#000;transform:scaleX(0.9062);-webkit-text-stroke:0.15px currentColor;">0.00 V</div>
<div class="abs" style="left:496px;top:119px;width:96.5px;height:1px;background:#dcdcdc"></div>
<svg class="abs" style="left:418.5px;top:121px" width="6" height="6" viewBox="0 0 6 6"><rect width="6" height="6" fill="#2a6e84"/><rect width="6" height="1.2" fill="#b8c8cc"/><path d="M0.5 1.5 L2.8 5.6 L5.5 2" fill="none" stroke="#080c10" stroke-width="1.4"/><rect x="4.2" y="3.2" width="1.8" height="2.8" fill="#5ad0d8"/></svg>
<div class="t" style="left:426.70px;top:120.78px;font-size:7px;font-weight:bold;color:#dcdcdc;transform:scaleX(0.8870);-webkit-text-stroke:0.15px currentColor;">Peak-to-Peak</div>
<div class="t" style="left:496.70px;top:120.78px;font-size:7px;font-weight:bold;color:#000;transform:scaleX(0.9062);-webkit-text-stroke:0.15px currentColor;">5.03 V</div>
<div class="t" style="left:545.00px;top:120.78px;font-size:7px;font-weight:bold;color:#000;transform:scaleX(0.9062);-webkit-text-stroke:0.15px currentColor;">5.00 V</div>
<div class="abs" style="left:496px;top:128px;width:96.5px;height:1px;background:#dcdcdc"></div>
<svg class="abs" style="left:418.5px;top:130px" width="6" height="6" viewBox="0 0 6 6"><rect width="6" height="6" fill="#2a6e84"/><rect width="6" height="1.2" fill="#b8c8cc"/><path d="M0.5 1.5 L2.8 5.6 L5.5 2" fill="none" stroke="#080c10" stroke-width="1.4"/><rect x="4.2" y="3.2" width="1.8" height="2.8" fill="#5ad0d8"/></svg>
<div class="t" style="left:426.70px;top:129.83px;font-size:7px;font-weight:bold;color:#dcdcdc;transform:scaleX(0.8546);-webkit-text-stroke:0.15px currentColor;">High</div>
<div class="t" style="left:496.70px;top:129.83px;font-size:7px;font-weight:bold;color:#000;transform:scaleX(0.9062);-webkit-text-stroke:0.15px currentColor;">2.44 V</div>
<div class="t" style="left:545.00px;top:129.83px;font-size:7px;font-weight:bold;color:#000;transform:scaleX(0.9062);-webkit-text-stroke:0.15px currentColor;">5.00 V</div>
<div class="abs" style="left:496px;top:137px;width:96.5px;height:1px;background:#dcdcdc"></div>
<svg class="abs" style="left:418.5px;top:139px" width="6" height="6" viewBox="0 0 6 6"><rect width="6" height="6" fill="#2a6e84"/><rect width="6" height="1.2" fill="#b8c8cc"/><path d="M0.5 1.5 L2.8 5.6 L5.5 2" fill="none" stroke="#080c10" stroke-width="1.4"/><rect x="4.2" y="3.2" width="1.8" height="2.8" fill="#5ad0d8"/></svg>
<div class="t" style="left:426.70px;top:138.88px;font-size:7px;font-weight:bold;color:#dcdcdc;transform:scaleX(0.8286);-webkit-text-stroke:0.15px currentColor;">Low</div>
<div class="t" style="left:496.70px;top:138.88px;font-size:7px;font-weight:bold;color:#000;transform:scaleX(0.9102);-webkit-text-stroke:0.15px currentColor;">-2.47 V</div>
<div class="t" style="left:545.00px;top:138.88px;font-size:7px;font-weight:bold;color:#000;transform:scaleX(0.9062);-webkit-text-stroke:0.15px currentColor;">0.00 V</div>
<div class="abs" style="left:496px;top:146px;width:96.5px;height:1px;background:#dcdcdc"></div>
<svg class="abs" style="left:418.5px;top:148px" width="6" height="6" viewBox="0 0 6 6"><rect width="6" height="6" fill="#2a6e84"/><rect width="6" height="1.2" fill="#b8c8cc"/><path d="M0.5 1.5 L2.8 5.6 L5.5 2" fill="none" stroke="#080c10" stroke-width="1.4"/><rect x="4.2" y="3.2" width="1.8" height="2.8" fill="#5ad0d8"/></svg>
<div class="t" style="left:426.70px;top:147.93px;font-size:7px;font-weight:bold;color:#dcdcdc;transform:scaleX(0.8267);-webkit-text-stroke:0.15px currentColor;">Amplitude</div>
<div class="t" style="left:496.70px;top:147.93px;font-size:7px;font-weight:bold;color:#000;transform:scaleX(0.9062);-webkit-text-stroke:0.15px currentColor;">4.91 V</div>
<div class="t" style="left:545.00px;top:147.93px;font-size:7px;font-weight:bold;color:#000;transform:scaleX(0.9062);-webkit-text-stroke:0.15px currentColor;">5.00 V</div>
<div class="abs" style="left:496px;top:155px;width:96.5px;height:1px;background:#dcdcdc"></div>
<svg class="abs" style="left:418.5px;top:157px" width="6" height="6" viewBox="0 0 6 6"><rect width="6" height="6" fill="#2a6e84"/><rect width="6" height="1.2" fill="#b8c8cc"/><path d="M0.5 1.5 L2.8 5.6 L5.5 2" fill="none" stroke="#080c10" stroke-width="1.4"/><rect x="4.2" y="3.2" width="1.8" height="2.8" fill="#5ad0d8"/></svg>
<div class="t" style="left:426.70px;top:156.98px;font-size:7px;font-weight:bold;color:#dcdcdc;transform:scaleX(0.8688);-webkit-text-stroke:0.15px currentColor;">AC RMS</div>
<div class="t" style="left:496.70px;top:156.98px;font-size:7px;font-weight:bold;color:#000;transform:scaleX(0.9062);-webkit-text-stroke:0.15px currentColor;">1.77 V</div>
<div class="t" style="left:545.00px;top:156.98px;font-size:7px;font-weight:bold;color:#000;transform:scaleX(0.9062);-webkit-text-stroke:0.15px currentColor;">2.49 V</div>
<div class="abs" style="left:496px;top:164px;width:96.5px;height:1px;background:#dcdcdc"></div>
<svg class="abs" style="left:418.5px;top:166px" width="6" height="6" viewBox="0 0 6 6"><rect width="6" height="6" fill="#2a6e84"/><rect width="6" height="1.2" fill="#b8c8cc"/><path d="M0.5 1.5 L2.8 5.6 L5.5 2" fill="none" stroke="#080c10" stroke-width="1.4"/><rect x="4.2" y="3.2" width="1.8" height="2.8" fill="#5ad0d8"/></svg>
<div class="t" style="left:426.70px;top:166.03px;font-size:7px;font-weight:bold;color:#dcdcdc;transform:scaleX(0.8441);-webkit-text-stroke:0.15px currentColor;">AC dBV</div>
<div class="t" style="left:496.70px;top:166.03px;font-size:7px;font-weight:bold;color:#000;transform:scaleX(0.8638);-webkit-text-stroke:0.15px currentColor;">4.94 dBV</div>
<div class="t" style="left:545.00px;top:166.03px;font-size:7px;font-weight:bold;color:#000;transform:scaleX(0.8638);-webkit-text-stroke:0.15px currentColor;">7.91 dBV</div>
<div class="abs" style="left:496px;top:173px;width:96.5px;height:1px;background:#dcdcdc"></div>
<svg class="abs" style="left:418.5px;top:175px" width="6" height="6" viewBox="0 0 6 6"><rect width="6" height="6" fill="#2a6e84"/><rect width="6" height="1.2" fill="#b8c8cc"/><path d="M0.5 1.5 L2.8 5.6 L5.5 2" fill="none" stroke="#080c10" stroke-width="1.4"/><rect x="4.2" y="3.2" width="1.8" height="2.8" fill="#5ad0d8"/></svg>
<div class="t" style="left:426.70px;top:175.08px;font-size:7px;font-weight:bold;color:#dcdcdc;transform:scaleX(0.8181);-webkit-text-stroke:0.15px currentColor;">AC dBm</div>
<div class="t" style="left:496.70px;top:175.08px;font-size:7px;font-weight:bold;color:#000;transform:scaleX(0.8466);-webkit-text-stroke:0.15px currentColor;">7.16 dBm</div>
<div class="t" style="left:545.00px;top:175.08px;font-size:7px;font-weight:bold;color:#000;transform:scaleX(0.8466);-webkit-text-stroke:0.15px currentColor;">10.1 dBm</div>
<div class="abs" style="left:496px;top:183px;width:96.5px;height:1px;background:#dcdcdc"></div>
<svg class="abs" style="left:418.5px;top:184px" width="6" height="6" viewBox="0 0 6 6"><rect width="6" height="6" fill="#2a6e84"/><rect width="6" height="1.2" fill="#b8c8cc"/><path d="M0.5 1.5 L2.8 5.6 L5.5 2" fill="none" stroke="#080c10" stroke-width="1.4"/><rect x="4.2" y="3.2" width="1.8" height="2.8" fill="#5ad0d8"/></svg>
<div class="t" style="left:426.70px;top:184.13px;font-size:7px;font-weight:bold;color:#dcdcdc;transform:scaleX(0.8514);-webkit-text-stroke:0.15px currentColor;">AC+DC RMS</div>
<div class="t" style="left:496.70px;top:184.13px;font-size:7px;font-weight:bold;color:#000;transform:scaleX(0.9062);-webkit-text-stroke:0.15px currentColor;">1.77 V</div>
<div class="t" style="left:545.00px;top:184.13px;font-size:7px;font-weight:bold;color:#000;transform:scaleX(0.9062);-webkit-text-stroke:0.15px currentColor;">3.54 V</div>
<div class="abs" style="left:496px;top:192px;width:96.5px;height:1px;background:#dcdcdc"></div>
<svg class="abs" style="left:418.5px;top:193px" width="6" height="6" viewBox="0 0 6 6"><rect width="6" height="6" fill="#2a6e84"/><rect width="6" height="1.2" fill="#b8c8cc"/><path d="M0.5 1.5 L2.8 5.6 L5.5 2" fill="none" stroke="#080c10" stroke-width="1.4"/><rect x="4.2" y="3.2" width="1.8" height="2.8" fill="#5ad0d8"/></svg>
<div class="t" style="left:426.70px;top:193.18px;font-size:7px;font-weight:bold;color:#dcdcdc;transform:scaleX(0.8444);-webkit-text-stroke:0.15px currentColor;">AC+DC dBV</div>
<div class="t" style="left:496.70px;top:193.18px;font-size:7px;font-weight:bold;color:#000;transform:scaleX(0.8638);-webkit-text-stroke:0.15px currentColor;">4.94 dBV</div>
<div class="t" style="left:545.00px;top:193.18px;font-size:7px;font-weight:bold;color:#000;transform:scaleX(0.8754);-webkit-text-stroke:0.15px currentColor;">11.0 dBV</div>
<div class="abs" style="left:496px;top:201px;width:96.5px;height:1px;background:#dcdcdc"></div>
<svg class="abs" style="left:418.5px;top:202px" width="6" height="6" viewBox="0 0 6 6"><rect width="6" height="6" fill="#2a6e84"/><rect width="6" height="1.2" fill="#b8c8cc"/><path d="M0.5 1.5 L2.8 5.6 L5.5 2" fill="none" stroke="#080c10" stroke-width="1.4"/><rect x="4.2" y="3.2" width="1.8" height="2.8" fill="#5ad0d8"/></svg>
<div class="t" style="left:426.70px;top:202.23px;font-size:7px;font-weight:bold;color:#dcdcdc;transform:scaleX(0.8371);-webkit-text-stroke:0.15px currentColor;">AC+DC dBm</div>
<div class="t" style="left:496.70px;top:202.23px;font-size:7px;font-weight:bold;color:#000;transform:scaleX(0.8466);-webkit-text-stroke:0.15px currentColor;">7.16 dBm</div>
<div class="t" style="left:545.00px;top:202.23px;font-size:7px;font-weight:bold;color:#000;transform:scaleX(0.8466);-webkit-text-stroke:0.15px currentColor;">13.2 dBm</div>
<div class="abs" style="left:496px;top:210px;width:96.5px;height:1px;background:#dcdcdc"></div>
<div class="t" style="left:417.30px;top:211.28px;font-size:7px;font-weight:bold;color:#dcdcdc;transform:scaleX(0.8192);-webkit-text-stroke:0.15px currentColor;">Timing</div>
<div class="abs" style="left:496px;top:219px;width:96.5px;height:1px;background:#dcdcdc"></div>
<svg class="abs" style="left:418.5px;top:221px" width="6" height="6" viewBox="0 0 6 6"><rect width="6" height="6" fill="#2a6e84"/><rect width="6" height="1.2" fill="#b8c8cc"/><path d="M0.5 1.5 L2.8 5.6 L5.5 2" fill="none" stroke="#080c10" stroke-width="1.4"/><rect x="4.2" y="3.2" width="1.8" height="2.8" fill="#5ad0d8"/></svg>
<div class="t" style="left:426.70px;top:220.33px;font-size:7px;font-weight:bold;color:#dcdcdc;transform:scaleX(0.8566);-webkit-text-stroke:0.15px currentColor;">Duty Cycle</div>
<div class="t" style="left:496.70px;top:220.33px;font-size:7px;font-weight:bold;color:#000;transform:scaleX(0.8786);-webkit-text-stroke:0.15px currentColor;">50.2 %</div>
<div class="t" style="left:545.00px;top:220.33px;font-size:7px;font-weight:bold;color:#000;transform:scaleX(0.8786);-webkit-text-stroke:0.15px currentColor;">49.6 %</div>
<div class="abs" style="left:496px;top:228px;width:96.5px;height:1px;background:#dcdcdc"></div>
<svg class="abs" style="left:418.5px;top:230px" width="6" height="6" viewBox="0 0 6 6"><rect width="6" height="6" fill="#2a6e84"/><rect width="6" height="1.2" fill="#b8c8cc"/><path d="M0.5 1.5 L2.8 5.6 L5.5 2" fill="none" stroke="#080c10" stroke-width="1.4"/><rect x="4.2" y="3.2" width="1.8" height="2.8" fill="#5ad0d8"/></svg>
<div class="t" style="left:426.70px;top:229.38px;font-size:7px;font-weight:bold;color:#dcdcdc;transform:scaleX(0.8636);-webkit-text-stroke:0.15px currentColor;">Positive Width</div>
<div class="t" style="left:496.70px;top:229.38px;font-size:7px;font-weight:bold;color:#000;transform:scaleX(0.8887);-webkit-text-stroke:0.15px currentColor;">0.502 ms</div>
<div class="t" style="left:545.00px;top:229.38px;font-size:7px;font-weight:bold;color:#000;transform:scaleX(0.8887);-webkit-text-stroke:0.15px currentColor;">0.496 ms</div>
<div class="abs" style="left:496px;top:237px;width:96.5px;height:1px;background:#dcdcdc"></div>
<svg class="abs" style="left:418.5px;top:239px" width="6" height="6" viewBox="0 0 6 6"><rect width="6" height="6" fill="#2a6e84"/><rect width="6" height="1.2" fill="#b8c8cc"/><path d="M0.5 1.5 L2.8 5.6 L5.5 2" fill="none" stroke="#080c10" stroke-width="1.4"/><rect x="4.2" y="3.2" width="1.8" height="2.8" fill="#5ad0d8"/></svg>
<div class="t" style="left:426.70px;top:238.43px;font-size:7px;font-weight:bold;color:#dcdcdc;transform:scaleX(0.8772);-webkit-text-stroke:0.15px currentColor;">Negative Width</div>
<div class="t" style="left:496.70px;top:238.43px;font-size:7px;font-weight:bold;color:#000;transform:scaleX(0.8887);-webkit-text-stroke:0.15px currentColor;">0.498 ms</div>
<div class="t" style="left:545.00px;top:238.43px;font-size:7px;font-weight:bold;color:#000;transform:scaleX(0.8887);-webkit-text-stroke:0.15px currentColor;">0.504 ms</div>
<div class="abs" style="left:496px;top:246px;width:96.5px;height:1px;background:#dcdcdc"></div>
<svg class="abs" style="left:418.5px;top:248px" width="6" height="6" viewBox="0 0 6 6"><rect width="6" height="6" fill="#2a6e84"/><rect width="6" height="1.2" fill="#b8c8cc"/><path d="M0.5 1.5 L2.8 5.6 L5.5 2" fill="none" stroke="#080c10" stroke-width="1.4"/><rect x="4.2" y="3.2" width="1.8" height="2.8" fill="#5ad0d8"/></svg>
<div class="t" style="left:426.70px;top:247.48px;font-size:7px;font-weight:bold;color:#dcdcdc;transform:scaleX(0.8588);-webkit-text-stroke:0.15px currentColor;">Rise Time</div>
<div class="t" style="left:496.70px;top:247.48px;font-size:7px;font-weight:bold;color:#000;transform:scaleX(0.8887);-webkit-text-stroke:0.15px currentColor;">0.290 ms</div>
<div class="t" style="left:545.00px;top:247.48px;font-size:7px;font-weight:bold;color:#000;transform:scaleX(0.8887);-webkit-text-stroke:0.15px currentColor;">0.006 ms</div>
<div class="abs" style="left:496px;top:255px;width:96.5px;height:1px;background:#dcdcdc"></div>
<svg class="abs" style="left:418.5px;top:257px" width="6" height="6" viewBox="0 0 6 6"><rect width="6" height="6" fill="#2a6e84"/><rect width="6" height="1.2" fill="#b8c8cc"/><path d="M0.5 1.5 L2.8 5.6 L5.5 2" fill="none" stroke="#080c10" stroke-width="1.4"/><rect x="4.2" y="3.2" width="1.8" height="2.8" fill="#5ad0d8"/></svg>
<div class="t" style="left:426.70px;top:256.53px;font-size:7px;font-weight:bold;color:#dcdcdc;transform:scaleX(0.9034);-webkit-text-stroke:0.15px currentColor;">Fall Time</div>
<div class="t" style="left:496.70px;top:256.53px;font-size:7px;font-weight:bold;color:#000;transform:scaleX(0.8887);-webkit-text-stroke:0.15px currentColor;">0.286 ms</div>
<div class="t" style="left:545.00px;top:256.53px;font-size:7px;font-weight:bold;color:#000;transform:scaleX(0.8887);-webkit-text-stroke:0.15px currentColor;">0.006 ms</div>
<div class="abs" style="left:496px;top:264px;width:96.5px;height:1px;background:#dcdcdc"></div>
<svg class="abs" style="left:418.5px;top:266px" width="6" height="6" viewBox="0 0 6 6"><rect width="6" height="6" fill="#2a6e84"/><rect width="6" height="1.2" fill="#b8c8cc"/><path d="M0.5 1.5 L2.8 5.6 L5.5 2" fill="none" stroke="#080c10" stroke-width="1.4"/><rect x="4.2" y="3.2" width="1.8" height="2.8" fill="#5ad0d8"/></svg>
<div class="t" style="left:426.70px;top:265.58px;font-size:7px;font-weight:bold;color:#dcdcdc;transform:scaleX(0.8396);-webkit-text-stroke:0.15px currentColor;">Period</div>
<div class="t" style="left:496.70px;top:265.58px;font-size:7px;font-weight:bold;color:#000;transform:scaleX(0.8856);-webkit-text-stroke:0.15px currentColor;">1.00 ms</div>
<div class="t" style="left:545.00px;top:265.58px;font-size:7px;font-weight:bold;color:#000;transform:scaleX(0.8856);-webkit-text-stroke:0.15px currentColor;">1.00 ms</div>
<div class="abs" style="left:496px;top:273px;width:96.5px;height:1px;background:#dcdcdc"></div>
<svg class="abs" style="left:418.5px;top:275px" width="6" height="6" viewBox="0 0 6 6"><rect width="6" height="6" fill="#2a6e84"/><rect width="6" height="1.2" fill="#b8c8cc"/><path d="M0.5 1.5 L2.8 5.6 L5.5 2" fill="none" stroke="#080c10" stroke-width="1.4"/><rect x="4.2" y="3.2" width="1.8" height="2.8" fill="#5ad0d8"/></svg>
<div class="t" style="left:426.70px;top:274.63px;font-size:7px;font-weight:bold;color:#dcdcdc;transform:scaleX(0.8643);-webkit-text-stroke:0.15px currentColor;">Frequency</div>
<div class="t" style="left:496.70px;top:274.63px;font-size:7px;font-weight:bold;color:#000;transform:scaleX(0.8901);-webkit-text-stroke:0.15px currentColor;">1.00 kHz</div>
<div class="t" style="left:545.00px;top:274.63px;font-size:7px;font-weight:bold;color:#000;transform:scaleX(0.8901);-webkit-text-stroke:0.15px currentColor;">1.00 kHz</div>
<div class="abs" style="left:496px;top:282px;width:96.5px;height:1px;background:#dcdcdc"></div>
<svg class="abs" style="left:418.5px;top:284px" width="6" height="6" viewBox="0 0 6 6"><rect width="6" height="6" fill="#2a6e84"/><rect width="6" height="1.2" fill="#b8c8cc"/><path d="M0.5 1.5 L2.8 5.6 L5.5 2" fill="none" stroke="#080c10" stroke-width="1.4"/><rect x="4.2" y="3.2" width="1.8" height="2.8" fill="#5ad0d8"/></svg>
<div class="t" style="left:426.70px;top:283.68px;font-size:7px;font-weight:bold;color:#dcdcdc;transform:scaleX(0.8533);-webkit-text-stroke:0.15px currentColor;">Phase</div>
<div class="t" style="left:496.70px;top:283.68px;font-size:7px;font-weight:bold;color:#000;transform:scaleX(0.8921);-webkit-text-stroke:0.15px currentColor;">-1.9 deg</div>
<div class="t" style="left:545.00px;top:283.68px;font-size:7px;font-weight:bold;color:#000;transform:scaleX(0.8870);-webkit-text-stroke:0.15px currentColor;">1.9 deg</div>
<div class="btn" style="left:417.3px;top:298px;width:34.80px;height:10.40px;border:1px dotted #6a6a6a"></div>
<div class="t" style="left:421.00px;top:299.83px;font-size:7px;font-weight:bold;color:#d0d0d0;transform:scaleX(0.8732);-webkit-text-stroke:0.15px currentColor;">Select All</div>
<div class="btn" style="left:453.7px;top:298px;width:38.40px;height:10.40px;border:1px dotted #6a6a6a"></div>
<div class="t" style="left:455.70px;top:299.83px;font-size:7px;font-weight:bold;color:#d0d0d0;transform:scaleX(0.8615);-webkit-text-stroke:0.15px currentColor;">Unselect All</div>
<div class="abs" style="left:499px;top:299.5px;width:5px;height:7px;border-radius:1px;background:linear-gradient(#7ac8e8,#2a7aa8);border:1px solid #1a3a4a"></div>
<div class="t" style="left:506.70px;top:299.33px;font-size:7px;font-weight:bold;color:#d0d0d0;transform:scaleX(0.8555);-webkit-text-stroke:0.15px currentColor;">Show on Screen</div>
<div class="btn" style="left:564.9px;top:298px;width:23.70px;height:10.40px;border:1px dotted #6a6a6a"></div>
<div class="t" style="left:569.30px;top:299.83px;font-size:7px;font-weight:bold;color:#d0d0d0;transform:scaleX(0.8236);-webkit-text-stroke:0.15px currentColor;">Close</div>
<div class="btn" style="left:564.9px;top:312.6px;width:23.70px;height:9.80px;border:1px dotted #6a6a6a"></div>
<div class="t" style="left:571.00px;top:314.13px;font-size:7px;font-weight:bold;color:#d0d0d0;transform:scaleX(0.8568);-webkit-text-stroke:0.15px currentColor;">Help</div>
</body></html>
